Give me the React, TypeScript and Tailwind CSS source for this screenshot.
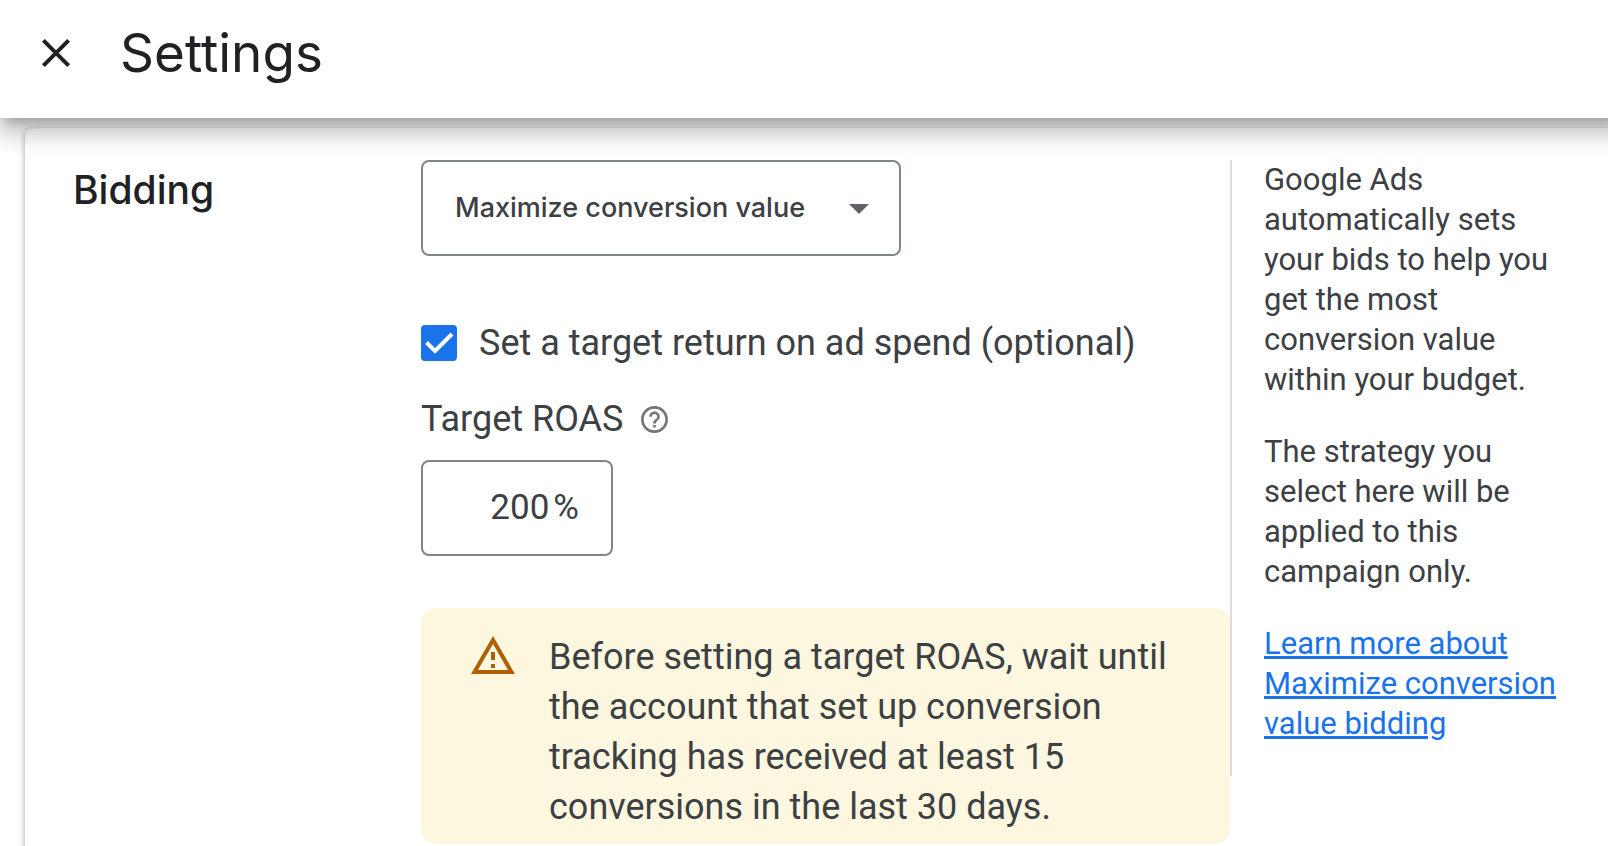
import { useState } from 'react';

const sans = "font-['Roboto','Liberation_Sans',sans-serif]";

function Header() {
  return (
    <header className="relative z-10 -mr-10 flex items-center gap-10 bg-white pt-[18px] pb-[30px] pl-8 pr-8 shadow-[0_10px_10px_-6px_rgba(0,0,0,0.2),0_16px_20px_2px_rgba(0,0,0,0.14),0_6px_28px_4px_rgba(0,0,0,0.12)]">
      <button type="button" aria-label="Close" className="flex h-12 w-12 shrink-0 items-center justify-center text-[#202124]">
        <svg viewBox="0 0 28 28" className="h-7 w-7" fill="none" stroke="currentColor" strokeWidth="4">
          <path d="M1.4 1.4 26.6 26.6M26.6 1.4 1.4 26.6" />
        </svg>
      </button>
      <h1 className="font-['Inter','Roboto',sans-serif] text-[53px] leading-[70px] text-[#202124]">Settings</h1>
    </header>
  );
}

function StrategySelect() {
  return (
    <div className="relative w-[480px] max-w-full">
      <select
        aria-label="Bid strategy"
        defaultValue="value"
        className="h-24 w-full appearance-none rounded-lg border-2 border-[#80868b] bg-white pl-8 pr-20 font-['Inter','Roboto',sans-serif] text-[27px] font-medium text-[#3c4043]"
      >
        <option value="value">Maximize conversion value</option>
        <option value="conversions">Maximize conversions</option>
        <option value="clicks">Maximize clicks</option>
      </select>
      <svg viewBox="0 0 20 10" className="pointer-events-none absolute top-[44px] right-8 h-[10px] w-5" fill="#5f6368">
        <path d="M0 0h20L10 10z" />
      </svg>
    </div>
  );
}

function TargetCheckbox({ checked, onChange }: { checked: boolean; onChange: (v: boolean) => void }) {
  return (
    <label className="flex items-center gap-[22px] text-[36px] leading-[50px]">
      <span className="relative h-9 w-9 shrink-0">
        <input
          type="checkbox"
          checked={checked}
          onChange={(e) => onChange(e.target.checked)}
          className="block h-9 w-9 appearance-none rounded border-4 border-[#5f6368] checked:border-[#1a73e8] checked:bg-[#1a73e8]"
        />
        {checked && (
          <svg viewBox="0 0 36 36" className="pointer-events-none absolute inset-0 h-9 w-9" fill="none" stroke="#fff" strokeWidth="4">
            <path d="M5.5 17.5l8.5 8.5L31 9" />
          </svg>
        )}
      </span>
      Set a target return on ad spend (optional)
    </label>
  );
}

function HelpIcon() {
  return (
    <svg viewBox="2 2 20 20" className="h-[27px] w-[27px]" fill="#757575">
      <path d="M11 18h2v-2h-2v2zm1-16C6.48 2 2 6.48 2 12s4.48 10 10 10 10-4.48 10-10S17.52 2 12 2zm0 18c-4.41 0-8-3.59-8-8s3.59-8 8-8 8 3.59 8 8-3.59 8-8 8zm0-14c-2.21 0-4 1.79-4 4h2c0-1.1.9-2 2-2s2 .9 2 2c0 2-3 1.75-3 5h2c0-2.25 3-2.5 3-5 0-2.21-1.79-4-4-4z" />
    </svg>
  );
}

function TargetRoas() {
  return (
    <div>
      <div className="flex items-center gap-[18px]">
        <label htmlFor="roas" className="text-[36px] leading-[50px]">Target ROAS</label>
        <button type="button" aria-label="Help">
          <HelpIcon />
        </button>
      </div>
      <div className="mt-4 flex h-24 w-48 items-center gap-1 rounded-lg border-2 border-[#80868b] pr-8 text-[35px]">
        <input id="roas" type="text" defaultValue="200" className="w-full min-w-0 flex-1 bg-transparent text-right outline-none" />
        <span>%</span>
      </div>
    </div>
  );
}

function Warning() {
  return (
    <div className="flex gap-[34px] rounded-2xl bg-[#fef7e0] pt-6 pr-9 pb-3 pl-[50px]">
      <svg viewBox="1 2 22 19" className="mt-1 h-[38px] w-[44px] shrink-0" fill="#b06000">
        <path d="M12 5.99 19.53 19H4.47L12 5.99M12 2 1 21h22L12 2zm1 14h-2v2h2v-2zm0-6h-2v4h2v-4z" />
      </svg>
      <p className="text-[36px] leading-[50px]">
        Before setting a target ROAS, wait until the account that set up conversion tracking has received at least 15 conversions in the last 30 days.
      </p>
    </div>
  );
}

function HelpPanel() {
  return (
    <aside className="w-[378px] shrink-0 self-start border-l-2 border-[#dadce0] pr-10 pl-8 text-[31px] leading-10">
      <p className="mb-8">Google Ads automatically sets your bids to help you get the most conversion value within your budget.</p>
      <p className="mb-8">The strategy you select here will be applied to this campaign only.</p>
      <p className="mb-8">
        <a href="#learn" className="text-[#1a73e8] underline">Learn more about Maximize conversion value bidding</a>
      </p>
    </aside>
  );
}

export default function App() {
  const [useTarget, setUseTarget] = useState(true);

  return (
    <div className={`h-screen overflow-hidden bg-white text-[#3c4043] ${sans}`}>
      <Header />
      <main className="pt-[10px] pl-[25px]">
        <section className="flex rounded-tl-lg bg-white pt-8 pb-12 pl-12 shadow-[0_2px_4px_0_rgba(60,64,67,0.3),0_2px_6px_2px_rgba(60,64,67,0.15)]">
          <h2 className="w-[348px] shrink-0 pt-2 font-['Inter','Roboto',sans-serif] text-[39px] leading-[44px] font-medium text-[#202124]">Bidding</h2>
          <div className="flex min-w-0 flex-1 flex-col">
            <StrategySelect />
            <div className="mt-[62px] mb-[26px]">
              <TargetCheckbox checked={useTarget} onChange={setUseTarget} />
            </div>
            {useTarget && <TargetRoas />}
            <div className="mt-[52px]">
              <Warning />
            </div>
          </div>
          <HelpPanel />
        </section>
      </main>
    </div>
  );
}
